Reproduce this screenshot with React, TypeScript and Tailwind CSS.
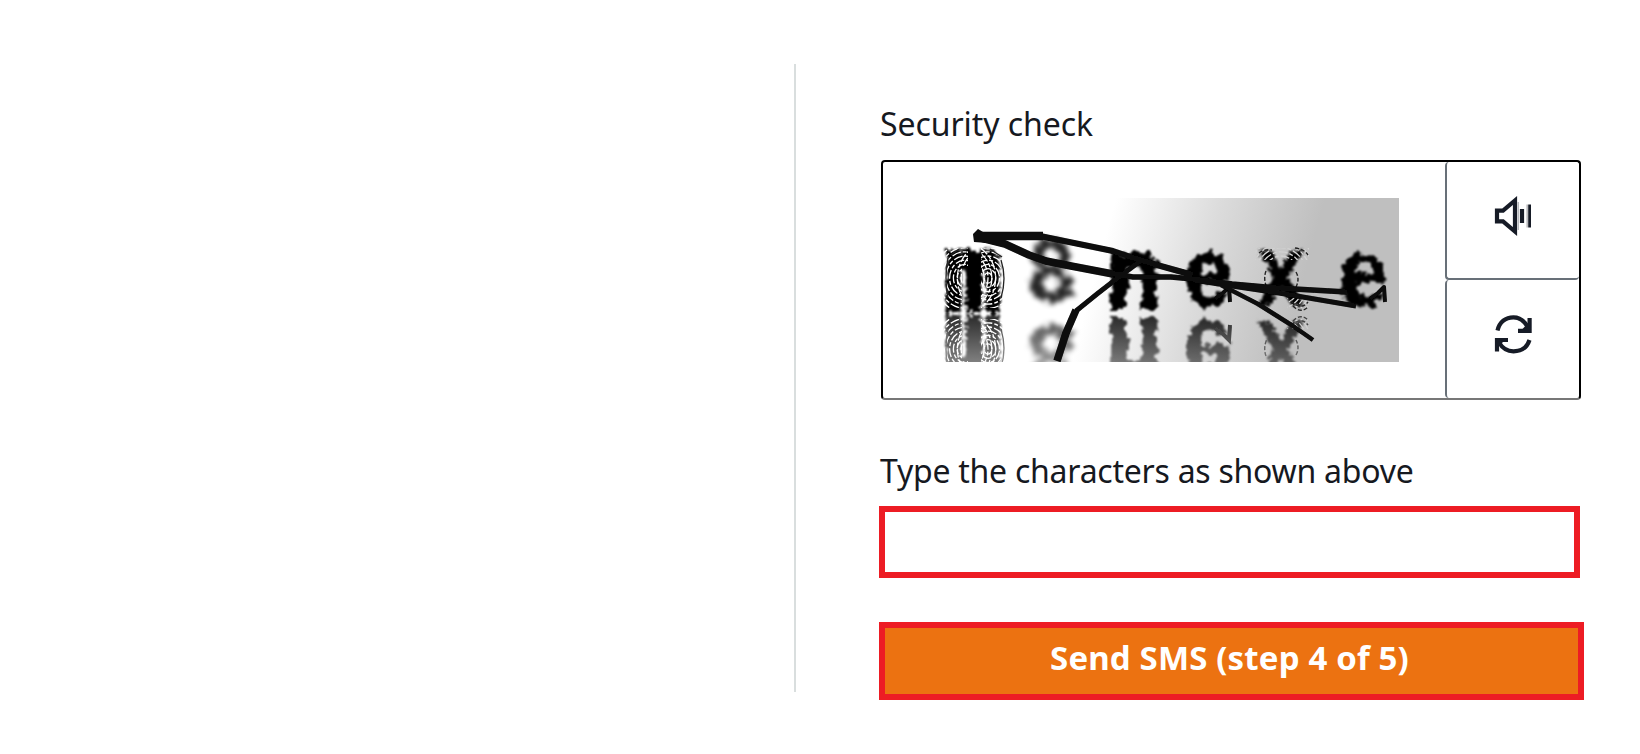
import React from "react";

type Glyph = { char: string; x: number; y: number; size: number; sx: number; filter: string; weight: number; opacity?: number };

const glyphs: Glyph[] = [
  { char: "m", x: 42, y: 109, size: 100, sx: 0.63, filter: "url(#ripple)", weight: 10 },
  { char: "8", x: 120, y: 103, size: 88, sx: 0.94, filter: "url(#soft)", weight: 1, opacity: 0.85 },
  { char: "n", x: 203, y: 109, size: 101, sx: 0.88, filter: "url(#rough)", weight: 4 },
  { char: "e", x: 277, y: 108, size: 98, sx: 0.88, filter: "url(#rough)", weight: 1 },
  { char: "x", x: 350, y: 107, size: 102, sx: 0.82, filter: "url(#ripple)", weight: 1 },
];

const lastGlyph: Glyph = { char: "e", x: 432, y: 108, size: 98, sx: 0.88, filter: "url(#rough)", weight: 1 };

function Letter({ glyph }: { glyph: Glyph }) {
  return (
    <g filter={glyph.filter} opacity={glyph.opacity ?? 1}>
      <text
        transform={`translate(${glyph.x} ${glyph.y}) scale(${glyph.sx} 1)`}
        textAnchor="middle"
        fontSize={glyph.size}
        fontWeight={700}
        fontFamily="'Liberation Sans', sans-serif"
        fill="#050505"
        stroke="#050505"
        strokeWidth={glyph.weight}
      >
        {glyph.char}
      </text>
    </g>
  );
}

function Rings({ cx, cy, from, color }: { cx: number; cy: number; from: number; color: string }) {
  return (
    <g fill="none" stroke={color} strokeWidth="1.3">
      {[0, 1, 2, 3, 4, 5, 6, 7].map((n) => (
        <ellipse key={n} cx={cx} cy={cy} rx={from + n * 3.8} ry={from * 1.3 + n * 4.2} strokeDasharray="9 2 4 2" />
      ))}
    </g>
  );
}

function Captcha() {
  return (
    <svg width="468" height="164" viewBox="0 0 468 164" className="block">
      <defs>
        <linearGradient id="backdrop" gradientUnits="userSpaceOnUse" x1="185" y1="0" x2="380" y2="53">
          <stop offset="0" stopColor="#fff" />
          <stop offset="0.5" stopColor="#dcdcdc" />
          <stop offset="1" stopColor="#bfbfbf" />
        </linearGradient>
        <linearGradient id="fade" x1="0" y1="0" x2="0" y2="1">
          <stop offset="0" stopColor="#fff" stopOpacity="0.85" />
          <stop offset="1" stopColor="#fff" stopOpacity="0.5" />
        </linearGradient>
        <mask id="fadeMask" maskUnits="userSpaceOnUse" x="0" y="110" width="468" height="54">
          <rect x="0" y="115" width="468" height="49" fill="url(#fade)" />
        </mask>
        <clipPath id="mBand">
          <path d="M12 50H37V68H31V110H12zM50 50H76V110H50z" />
        </clipPath>
        <clipPath id="xBand">
          <path d="M324 50H378V62H324zM356 100H378V110H356z" />
        </clipPath>
        <filter id="rough" x="-20%" y="-20%" width="140%" height="140%">
          <feTurbulence type="fractalNoise" baseFrequency="0.13" numOctaves="2" seed="4" />
          <feDisplacementMap in="SourceGraphic" scale="13" xChannelSelector="R" yChannelSelector="G" />
          <feGaussianBlur stdDeviation="0.8" />
        </filter>
        <filter id="ripple" x="-20%" y="-20%" width="140%" height="140%">
          <feTurbulence type="fractalNoise" baseFrequency="0.28" numOctaves="1" seed="8" />
          <feDisplacementMap in="SourceGraphic" scale="11" xChannelSelector="R" yChannelSelector="G" />
          <feGaussianBlur stdDeviation="0.8" />
        </filter>
        <filter id="soft" x="-30%" y="-30%" width="160%" height="160%">
          <feTurbulence type="fractalNoise" baseFrequency="0.16" numOctaves="2" seed="12" />
          <feDisplacementMap in="SourceGraphic" scale="18" xChannelSelector="R" yChannelSelector="G" />
          <feGaussianBlur stdDeviation="2.5" />
        </filter>
        <filter id="lineSoft" filterUnits="userSpaceOnUse" x="0" y="0" width="468" height="164">
          <feGaussianBlur stdDeviation="0.7" />
        </filter>
      </defs>
      <rect width="468" height="164" fill="url(#backdrop)" />
      <g id="letters">
        <path d="M40 56H51V108H40z" fill="#050505" filter="url(#ripple)" />
        {glyphs.map((g) => (
          <Letter key={g.char} glyph={g} />
        ))}
        <g filter="url(#lineSoft)">
          <path d="M284 101L292 95L298 89L299 104" stroke="#080808" strokeWidth="4" fill="none" />
          <g clipPath="url(#mBand)">
            <Rings cx={34} cy={80} from={4} color="#ffffff" />
            <Rings cx={57} cy={80} from={4} color="#ffffff" />
            <path d="M70 62Q76 80 70 100M17 60Q13 80 17 100M20 57L28 51M59 51L71 59" stroke="#222222" strokeWidth="1.3" fill="none" />
          </g>
          <g clipPath="url(#xBand)">
            <Rings cx={350} cy={82} from={12} color="#d2d2d2" />
          </g>
          <path d="M328 55Q333 51 341 52M364 50Q373 51 377 57M360 103Q370 113 377 104M362 108Q370 116 377 109M335 73Q332 81 336 90M365 74Q369 81 365 89" stroke="#222222" strokeWidth="1.4" strokeDasharray="4 2" fill="none" />
        </g>
      </g>
      <g mask="url(#fadeMask)">
        <use href="#letters" transform="translate(0 231) scale(1 -1)" />
      </g>
      <Letter glyph={lastGlyph} />
      <g fill="none" stroke="#080808" strokeLinejoin="round" filter="url(#lineSoft)">
        <path d="M439 101L447 95L453 89L454 104" strokeWidth="4" />
        <path d="M47 31L42 36L43 44L72 46L66 34L52 34Z" fill="#080808" stroke="none" />
        <path d="M46 38H112" strokeWidth="8.5" />
        <path d="M109 38L182 53L203 60L226 67L262 77" strokeWidth="6" />
        <path d="M50 40L74 46L98 57L115 63L140 68L182 76" strokeWidth="7.5" />
        <path d="M178 75L202 79H240L262 81L301 86L346 90L416 94" strokeWidth="5.5" />
        <path d="M262 82L301 88L348 95L425 108" strokeWidth="5" />
        <path d="M290 87L327 106L362 128L382 142" strokeWidth="4.5" />
        <path d="M212 61L184 82L166 96L145 113" strokeWidth="5" />
        <path d="M145 112L135 135L126 163" strokeWidth="7.5" />
      </g>
    </svg>
  );
}

function SpeakerIcon() {
  return (
    <svg width="38" height="40" viewBox="0 0 38 40" fill="none" stroke="#161b26" strokeWidth="4.2" className="block">
      <path d="M3 14.6V25.4H9L21 35.5V4.5L9 14.6Z" />
      <path d="M28 13V27" strokeWidth="4.2" />
      <path d="M24.2 6V34" stroke="#a5a8ad" strokeWidth="1.2" />
      <path d="M35.6 8.5V31.5" strokeWidth="2.8" />
      <path d="M33.2 8.5V31.5" stroke="#b9babd" strokeWidth="1.6" />
    </svg>
  );
}

function RefreshIcon() {
  return (
    <svg width="38" height="40" viewBox="0 0 38 40" fill="none" stroke="#161b26" strokeWidth="4.2" className="block">
      <path d="M3.5 16.5C5.5 8 11.5 3.3 19.5 3.3C25.5 3.3 30 6.5 33.5 12.5" />
      <path d="M35.6 4V16.8H24" />
      <path d="M35 8L28 15.5L35 17Z" fill="#161b26" stroke="none" />
      <path d="M35.5 26C33 33.5 27 37.3 19.5 37.3C13 37.3 8.5 34.5 5 28.5" />
      <path d="M3 37.5V26H14" />
      <path d="M3 34L10 27L3 25Z" fill="#161b26" stroke="none" />
    </svg>
  );
}

export default function App() {
  return (
    <main className="flex h-[754px] w-[1640px] overflow-hidden bg-white font-['Noto_Sans',sans-serif] text-[#16191f]">
      <div className="mt-16 ml-[794px] h-[628px] w-[2px] shrink-0 bg-[#d9dede]" />
      <section className="ml-[82px] flex w-[706px] shrink-0 flex-col pt-[101px]">
        <h2 className="ml-[2px] h-[46px] text-[32px] leading-[46px] tracking-[-0.08px] whitespace-nowrap">Security check</h2>
        <div className="mt-[13px] ml-[2.5px] flex h-[240px] w-[700px] rounded-[4px] border-2 border-black border-b-[#777]">
          <div className="flex flex-1 items-start pt-[36px] pl-[48px]">
            <Captcha />
          </div>
          <div className="flex w-[134px] flex-col">
            <button aria-label="Play audio" className="flex h-[118px] items-center justify-center rounded-[4px] border-b-2 border-l-2 border-[#687078] pb-[9px]">
              <SpeakerIcon />
            </button>
            <button aria-label="Refresh" className="flex h-[118px] items-center justify-center rounded-[4px] border-l-2 border-[#687078] pb-[11px]">
              <RefreshIcon />
            </button>
          </div>
        </div>
        <label htmlFor="characters" className="mt-[48px] ml-[2px] block h-[46px] text-[32px] leading-[46px] tracking-[-0.25px] whitespace-nowrap">
          Type the characters as shown above
        </label>
        <input id="characters" className="mt-[12px] ml-[0.5px] block h-[72px] w-[701px] border-[6px] border-[#ed1c24] bg-white px-4 text-[32px] outline-none" />
        <button className="mt-[44px] ml-[0.5px] block h-[78px] w-[705px] border-[6px] border-[#ed1c24] bg-[#ec7211] pr-[3px] pb-[6px] text-[33px] font-bold tracking-[0.15px] text-white">
          Send SMS (step 4 of 5)
        </button>
      </section>
    </main>
  );
}
